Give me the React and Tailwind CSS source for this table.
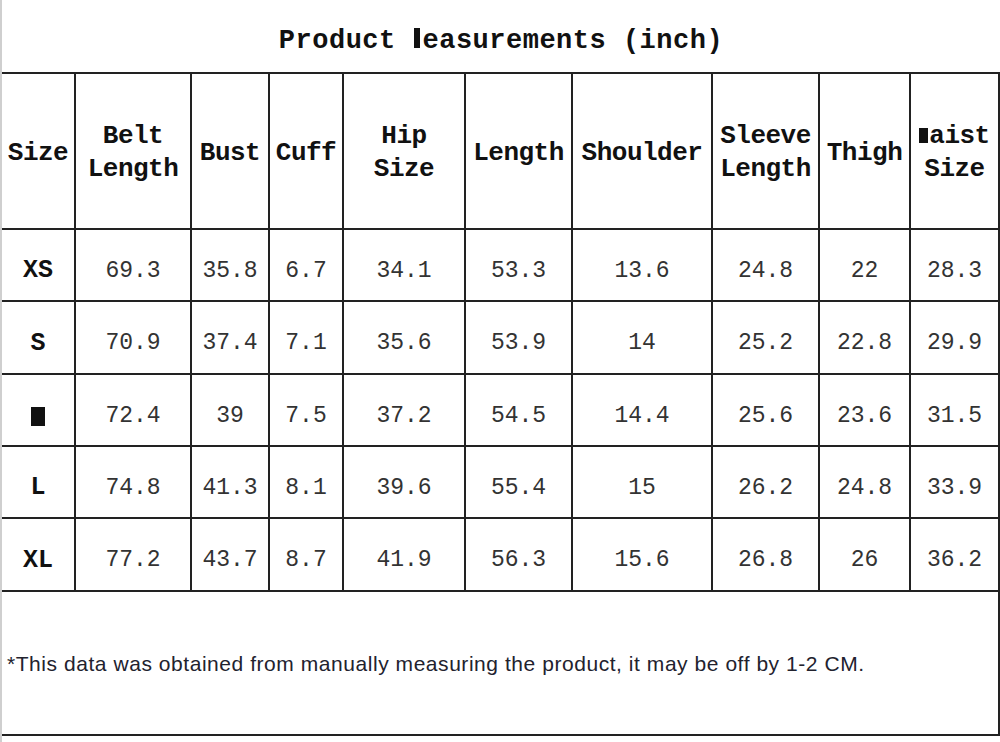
import React from 'react';

const cols = [
  { key: 'size', label: ['Size'], w: 'w-[74px]' },
  { key: 'belt', label: ['Belt', 'Length'], w: 'w-[116px]' },
  { key: 'bust', label: ['Bust'], w: 'w-[78px]' },
  { key: 'cuff', label: ['Cuff'], w: 'w-[74px]' },
  { key: 'hip', label: ['Hip', 'Size'], w: 'w-[122px]' },
  { key: 'length', label: ['Length'], w: 'w-[107px]' },
  { key: 'shoulder', label: ['Shoulder'], w: 'w-[140px]' },
  { key: 'sleeve', label: ['Sleeve', 'Length'], w: 'w-[107px]' },
  { key: 'thigh', label: ['Thigh'], w: 'w-[91px]' },
  { key: 'waist', label: ['Waist', 'Size'], w: 'w-[89px]' },
];

const rows = [
  { h: 'h-[72px]', v: ['XS', '69.3', '35.8', '6.7', '34.1', '53.3', '13.6', '24.8', '22', '28.3'] },
  { h: 'h-[73px]', v: ['S', '70.9', '37.4', '7.1', '35.6', '53.9', '14', '25.2', '22.8', '29.9'] },
  { h: 'h-[72px]', v: ['M', '72.4', '39', '7.5', '37.2', '54.5', '14.4', '25.6', '23.6', '31.5'] },
  { h: 'h-[72px]', v: ['L', '74.8', '41.3', '8.1', '39.6', '55.4', '15', '26.2', '24.8', '33.9'] },
  { h: 'h-[73px]', v: ['XL', '77.2', '43.7', '8.7', '41.9', '56.3', '15.6', '26.8', '26', '36.2'] },
];

// the original chart shows M and W as solid blocks (missing glyph in its font)
// overflow-hidden puts the block's bottom edge on the text baseline
const Block = ({ ch, cls }) => (
  <span className={`inline-block overflow-hidden bg-[#111] text-[#111] text-center align-baseline ${cls}`}>{ch}</span>
);

const HeaderLabel = ({ text }) => {
  if (text === 'Waist') {
    return (
      <span>
        <Block ch="W" cls="w-[9px] h-[15px] text-[9px] leading-[15px] mr-[1px]" />aist
      </span>
    );
  }
  return <span>{text}</span>;
};

const SizeLabel = ({ text }) => {
  if (text === 'M') return <Block ch="M" cls="w-[14px] h-[19px] text-[14px] leading-[19px]" />;
  return <span>{text}</span>;
};

export default function App() {
  const mono = { fontFamily: '"Liberation Mono", "DejaVu Sans Mono", monospace' };

  return (
    <div className="w-[1000px] h-[742px] bg-white border-l-2 border-[#cfcfcf] overflow-hidden">
      {/* Title */}
      <div className="h-[72px] flex items-center justify-center pt-[10px]">
        <h1 style={mono} className="text-[27px] font-bold text-[#111] leading-none tracking-[0.5px]">
          Product <Block ch="M" cls="w-[6px] h-[20px] text-[7px] leading-[20px] mx-[2px]" />easurements (inch)
        </h1>
      </div>

      <div className="border-t-2 border-[#222]">
        {/* Header row */}
        <div className="flex h-[156px]">
          {cols.map((c) => (
            <div
              key={c.key}
              style={mono}
              className={`${c.w} shrink-0 border-r-2 border-b-2 border-[#222] flex flex-col items-center justify-center pt-[4px] text-[26px] font-bold leading-[33px] text-[#111] tracking-[-0.5px]`}
            >
              {c.label.map((l) => (
                <HeaderLabel key={l} text={l} />
              ))}
            </div>
          ))}
        </div>

        {/* Data rows */}
        {rows.map((r) => (
          <div key={r.v[0]} className={`flex ${r.h}`}>
            {r.v.map((val, i) => (
              <div
                key={cols[i].key}
                style={mono}
                className={`${cols[i].w} shrink-0 border-r-2 border-b-2 border-[#222] flex items-center justify-center pt-[12px] ${
                  i === 0 ? 'text-[25px] font-bold text-[#111]' : 'text-[23px] text-[#333]'
                }`}
              >
                {i === 0 ? <SizeLabel text={val} /> : val}
              </div>
            ))}
          </div>
        ))}

        {/* Footer note */}
        <div className="h-[144px] border-r-2 border-b-2 border-[#222] flex items-center pl-[5px] pt-[2px]">
          <p
            style={{ fontFamily: '"Liberation Sans", Arial, sans-serif' }}
            className="text-[21px] text-[#22222e] tracking-[0.55px]"
          >
            *This data was obtained from manually measuring the product, it may be off by 1-2 CM.
          </p>
        </div>
      </div>
    </div>
  );
}
